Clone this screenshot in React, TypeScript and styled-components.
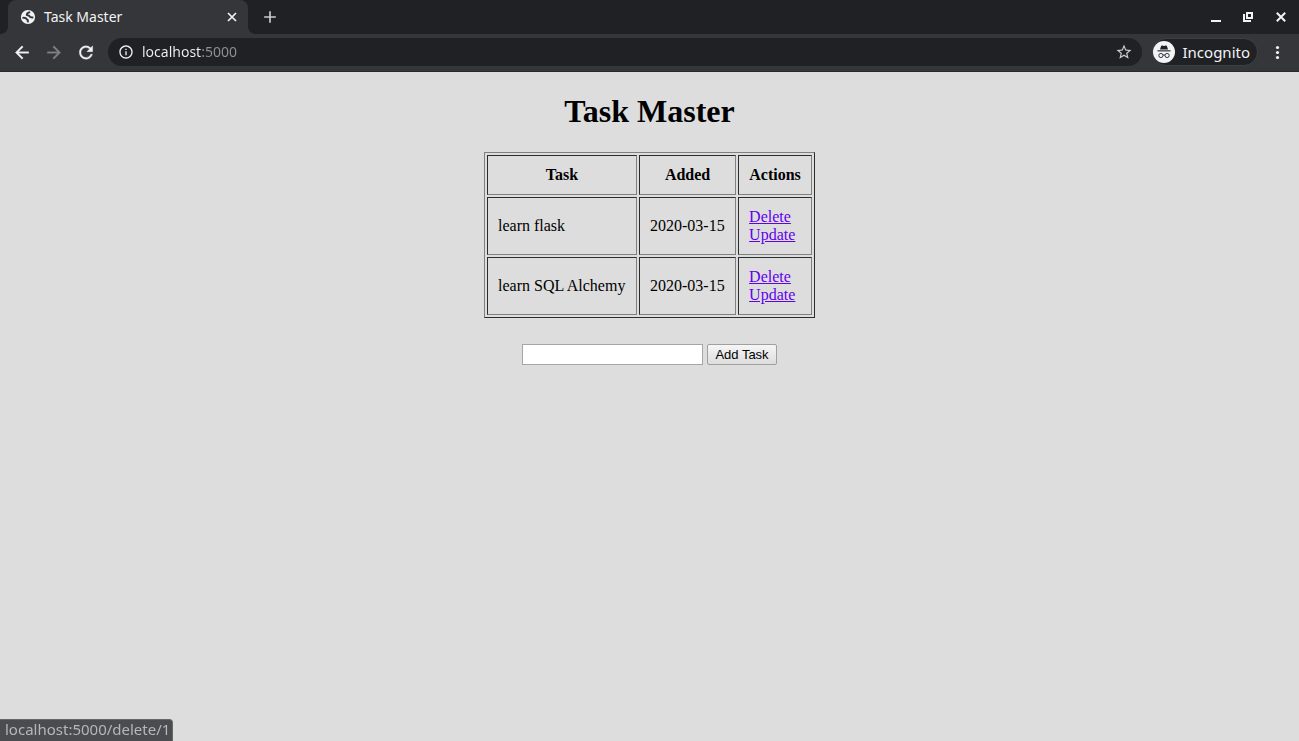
import React from "react";
import styled, { createGlobalStyle, css } from "styled-components";
import {
  MdAdd,
  MdArrowBack,
  MdArrowForward,
  MdOutlineInfo,
  MdRefresh,
  MdStarBorder,
} from "react-icons/md";

const GlobalStyle = createGlobalStyle`
  * { box-sizing: border-box; }
  body { margin: 0; background: #dddddd; }
`;

const chromeFont = css`
  font-family: "Noto Sans", "Open Sans", sans-serif;
  font-size: 14px;
  line-height: 20px;
`;

const Browser = styled.div`
  display: flex;
  flex-direction: column;
  min-height: 100vh;
`;

const TabStrip = styled.header`
  display: flex;
  align-items: stretch;
  height: 34px;
  padding-left: 8px;
  background: #202124;
  color: #e8eaed;
`;

const Tab = styled.div`
  ${chromeFont}
  position: relative;
  display: flex;
  align-items: center;
  gap: 8px;
  width: 240px;
  padding: 0 10px 0 12px;
  border-radius: 8px 8px 0 0;
  background: #35363a;
  color: #f1f3f4;

  &::before,
  &::after {
    content: "";
    position: absolute;
    bottom: 0;
    width: 8px;
    height: 8px;
  }
  &::before {
    left: -8px;
    background: radial-gradient(circle at 0 0, transparent 8px, #35363a 8px);
  }
  &::after {
    right: -8px;
    background: radial-gradient(circle at 100% 0, transparent 8px, #35363a 8px);
  }
`;

const TabTitle = styled.span`
  flex: 1;
`;

const IconButton = styled.button<{ $size: number; $color?: string }>`
  display: flex;
  align-items: center;
  justify-content: center;
  flex: none;
  width: ${(p) => p.$size}px;
  height: ${(p) => p.$size}px;
  padding: 0;
  border: 0;
  background: none;
  color: ${(p) => p.$color ?? "#f1f3f4"};
`;

const NewTab = styled.div`
  display: flex;
  align-items: center;
  margin-left: 12px;
`;

const WindowControls = styled.div`
  display: flex;
  align-items: center;
  gap: 12px;
  margin-left: auto;
  padding-right: 8px;
`;

const Toolbar = styled.nav`
  display: flex;
  align-items: center;
  height: 38px;
  padding: 0 12px 1px;
  border-bottom: 1px solid #28292c;
  background: #35363a;
`;

const NavButtons = styled.div`
  display: flex;
  gap: 12px;
  margin-right: 12px;

  path:not([fill="none"]) {
    stroke: currentColor;
    stroke-width: 0.4px;
  }
`;

const AddressBar = styled.label`
  display: flex;
  align-items: center;
  flex: 1;
  height: 28px;
  padding: 0 8px 0 10px;
  border-radius: 14px;
  background: #202124;
  color: #f1f3f4;
`;

const AddressInput = styled.input`
  ${chromeFont}
  flex: 1;
  min-width: 0;
  margin-left: 8px;
  padding: 0;
  border: 0;
  outline: 0;
  background: linear-gradient(to right, #f1f3f4 60px, #8f9296 60px);
  background-clip: text;
  -webkit-background-clip: text;
  color: transparent;
  caret-color: #f1f3f4;
`;

const Profile = styled.button`
  ${chromeFont}
  display: flex;
  align-items: center;
  gap: 8px;
  height: 28px;
  margin: 0 9px 0 10px;
  padding: 0 7px 0 0;
  border: 1px solid #3f4044;
  border-radius: 14px;
  background: #202124;
  color: #f1f3f4;
  font-size: 15px;
  line-height: 18px;
`;

const Page = styled.main`
  display: flex;
  flex-direction: column;
  align-items: center;
  flex: 1;
  background: #dddddd;
  color: #000;
  font-family: "Liberation Serif", serif;
  font-size: 16px;
`;

const Heading = styled.h1`
  margin: 21px 0 23px;
  font-size: 32px;
  line-height: 36px;
`;

const TaskTable = styled.table`
  width: 331px;
  border: 1px solid;
  border-color: #808080 #2c2c2c #2c2c2c #808080;
  border-spacing: 2px;

  th,
  td {
    padding: 10px;
    border: 1px solid;
    border-color: #2c2c2c #808080 #808080 #2c2c2c;
    line-height: 18px;
  }
`;

const ActionLink = styled.a`
  display: block;
  width: fit-content;
  color: #6200ee;
  text-decoration: underline;
`;

const TaskForm = styled.form`
  display: flex;
  gap: 4px;
  margin-top: 26px;
`;

const TaskInput = styled.input`
  width: 181px;
  height: 21px;
  padding: 1px 2px;
  border: 1px solid #a6a6a6;
  border-radius: 0;
  background: #fff;
  font: 13px "Liberation Sans", sans-serif;
`;

const SubmitButton = styled.button`
  width: 70px;
  height: 21px;
  padding: 0;
  border: 1px solid #a0a0a0;
  border-radius: 2px;
  background: linear-gradient(#f6f6f6, #dddddd);
  color: #000;
  font: 13px "Liberation Sans", sans-serif;
  white-space: nowrap;
`;

const StatusBubble = styled.footer`
  ${chromeFont}
  position: fixed;
  bottom: 0;
  left: 0;
  height: 22px;
  padding: 0 2px 0 5px;
  border-top: 1px solid #66676b;
  border-right: 1px solid #66676b;
  border-top-right-radius: 4px;
  background: #4b4c50;
  color: #b4b7bb;
  font-size: 15px;
  line-height: 18px;
`;

const GlobeIcon = () => (
  <svg width="16" height="16" viewBox="0 0 16 16" aria-hidden="true">
    <circle cx="8" cy="8" r="7.1" fill="#f1f3f4" />
    <g fill="none" stroke="#35363a" strokeWidth="1.9">
      <path d="M10.2 3.1Q6.6 3.6 6.8 6 7.6 6.6 9 6.6 9.8 8.7 13.4 8.4" />
      <path d="M2.4 8.9Q6 8.3 6.8 10.4 8.6 10.8 7.6 13.4" />
    </g>
  </svg>
);

const TabCloseIcon = () => (
  <svg width="12" height="12" viewBox="0 0 12 12" aria-hidden="true">
    <path
      d="m2 2 8 8M10 2l-8 8"
      stroke="currentColor"
      strokeWidth="1.7"
    />
  </svg>
);

const IncognitoIcon = () => (
  <svg width="22" height="22" viewBox="0 0 22 22" aria-hidden="true">
    <circle cx="11" cy="11" r="11" fill="#f1f3f4" />
    <path
      d="M7 8.4 8.1 5Q8.4 4.3 9.1 4.5L11 5l1.9-.5q.7-.2 1 .5L15 8.4Z"
      fill="#202124"
    />
    <path d="M4.5 9.3h13v1.1h-13Z" fill="#202124" />
    <g fill="none" stroke="#202124" strokeWidth="0.9">
      <circle cx="7.9" cy="14.5" r="2.1" />
      <circle cx="14.1" cy="14.5" r="2.1" />
      <path d="M10 14.2q1-.6 2 0" />
    </g>
  </svg>
);

const MinimizeIcon = () => (
  <svg width="20" height="20" viewBox="0 0 20 20" aria-hidden="true">
    <path d="M4 13h10v2H4z" fill="currentColor" />
  </svg>
);

const RestoreIcon = () => (
  <svg width="20" height="20" viewBox="0 0 20 20" aria-hidden="true">
    <path
      fill="currentColor"
      fillRule="evenodd"
      d="M7 5h7v7H7zM9 7v3h3V7zM4 7h2v6h6v2H4z"
    />
  </svg>
);

const CloseIcon = () => (
  <svg width="20" height="20" viewBox="0 0 20 20" aria-hidden="true">
    <path
      d="m5.8 5.8 8.4 8.4M14.2 5.8l-8.4 8.4"
      stroke="currentColor"
      strokeWidth="2"
    />
  </svg>
);

const MenuIcon = () => (
  <svg width="20" height="20" viewBox="0 0 20 20" aria-hidden="true">
    <g fill="currentColor">
      <circle cx="10.5" cy="5.5" r="1.6" />
      <circle cx="10.5" cy="10.5" r="1.6" />
      <circle cx="10.5" cy="15.5" r="1.6" />
    </g>
  </svg>
);

const tasks = [
  { id: 1, content: "learn flask", added: "2020-03-15" },
  { id: 2, content: "learn SQL Alchemy", added: "2020-03-15" },
];

export default function App() {
  return (
    <Browser>
      <GlobalStyle />
      <TabStrip>
        <Tab>
          <GlobeIcon />
          <TabTitle>Task Master</TabTitle>
          <IconButton $size={12} aria-label="Close tab">
            <TabCloseIcon />
          </IconButton>
        </Tab>
        <NewTab>
          <IconButton $size={20} $color="#c9cbce" aria-label="New tab">
            <MdAdd size={20} />
          </IconButton>
        </NewTab>
        <WindowControls>
          <IconButton $size={20} aria-label="Minimize">
            <MinimizeIcon />
          </IconButton>
          <IconButton $size={20} aria-label="Restore">
            <RestoreIcon />
          </IconButton>
          <IconButton $size={20} aria-label="Close window">
            <CloseIcon />
          </IconButton>
        </WindowControls>
      </TabStrip>

      <Toolbar>
        <NavButtons>
          <IconButton $size={20} aria-label="Back">
            <MdArrowBack size={21} />
          </IconButton>
          <IconButton $size={20} $color="#7f8083" aria-label="Forward">
            <MdArrowForward size={21} />
          </IconButton>
          <IconButton $size={20} aria-label="Reload">
            <MdRefresh size={21} />
          </IconButton>
        </NavButtons>
        <AddressBar>
          <MdOutlineInfo size={16} />
          <AddressInput aria-label="Address" defaultValue="localhost:5000" />
          <IconButton $size={20} $color="#c9cbce" aria-label="Bookmark">
            <MdStarBorder size={18} />
          </IconButton>
        </AddressBar>
        <Profile>
          <IncognitoIcon />
          Incognito
        </Profile>
        <IconButton $size={20} aria-label="Menu">
          <MenuIcon />
        </IconButton>
      </Toolbar>

      <Page>
        <Heading>Task Master</Heading>
        <TaskTable>
          <thead>
            <tr>
              <th>Task</th>
              <th>Added</th>
              <th>Actions</th>
            </tr>
          </thead>
          <tbody>
            {tasks.map((task) => (
              <tr key={task.id}>
                <td>{task.content}</td>
                <td>{task.added}</td>
                <td>
                  <ActionLink href={`/delete/${task.id}`}>Delete</ActionLink>
                  <ActionLink href={`/update/${task.id}`}>Update</ActionLink>
                </td>
              </tr>
            ))}
          </tbody>
        </TaskTable>
        <TaskForm onSubmit={(e) => e.preventDefault()}>
          <TaskInput type="text" name="content" aria-label="Task" />
          <SubmitButton type="submit">Add Task</SubmitButton>
        </TaskForm>
      </Page>

      <StatusBubble>localhost:5000/delete/1</StatusBubble>
    </Browser>
  );
}
